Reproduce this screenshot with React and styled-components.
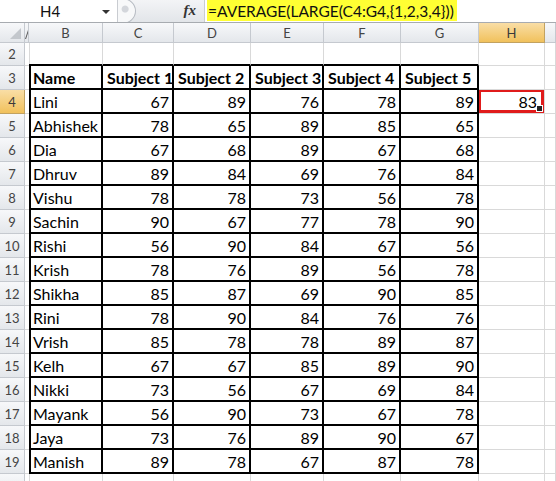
import React from "react";
import styled, { createGlobalStyle } from "styled-components";

const Global = createGlobalStyle`
  html, body { margin: 0; padding: 0; background: #fff; }
  body { font-family: Lato, "Open Sans", sans-serif; overflow: hidden; }
`;

const Page = styled.div`
  width: 556px;
  height: 481px;
  overflow: hidden;
  display: flex;
  flex-direction: column;
  background: #fff;
`;

const FormulaBar = styled.div`
  height: 22px;
  display: flex;
  align-items: stretch;
  border-bottom: 1px solid #a7abb0;
  background: #fff;
`;

const NameBox = styled.div`
  width: 117px;
  display: flex;
  align-items: center;
  position: relative;
  font-size: 15px;
  color: #111;
  padding-left: 40px;
  box-sizing: border-box;
`;

const DropArrow = styled.span`
  position: absolute;
  left: 102px;
  top: 10px;
  width: 0;
  height: 0;
  border-left: 4px solid transparent;
  border-right: 4px solid transparent;
  border-top: 4px solid #333;
`;

const Splitter = styled.div`
  width: 86px;
  background: linear-gradient(#f3f4f6, #e2e5e9);
  border-left: 1px solid #c9ccd1;
  display: flex;
  align-items: center;
  position: relative;
  overflow: hidden;
`;

const Grabber = styled.div`
  width: 26px;
  height: 24px;
  margin-left: -10px;
  border-radius: 50%;
  border: 1px solid #b7bcc3;
  background: radial-gradient(circle at 62% 42%, #d3d6db 0 3px, #f7f8f9 4px);
  flex-shrink: 0;
`;

const Fx = styled.span`
  position: absolute;
  right: 8px;
  top: 2px;
  font-family: "Liberation Serif", serif;
  font-style: italic;
  font-weight: bold;
  font-size: 15px;
  color: #333;
`;

const FormulaArea = styled.div`
  flex: 1;
  display: flex;
  align-items: center;
  padding-left: 2px;
  border-left: 1px solid #c9ccd1;
`;

const Highlight = styled.span`
  background: #ffff33;
  height: 21px;
  align-self: flex-start;
  display: flex;
  align-items: center;
  padding: 0 3px 0 1px;
  font-size: 15.5px;
  color: #111;
  white-space: nowrap;
`;

const Spacer = styled.div`
  height: 2px;
  background: #fff;
`;

const Sheet = styled.div`
  display: grid;
  grid-template-columns: 25px 4px 74px 71px 77px 73px 77px 78px 66px 11px;
  grid-template-rows: 20px 23px repeat(17, 24px) 24px;
  font-size: 16px;
  color: #000;
`;

const Cell = styled.div`
  box-sizing: border-box;
  position: relative;
  overflow: hidden;
  white-space: nowrap;
  display: flex;
  align-items: center;
  justify-content: ${(p) => (p.$align === "right" ? "flex-end" : "flex-start")};
  padding: ${(p) =>
    p.$align === "right" ? `0 ${p.$padRight || 3}px 0 0` : "0 0 0 4px"};
  font-weight: ${(p) => (p.$bold ? 700 : 400)};
  border-right: ${(p) => (p.$blackRight ? "2px solid #000" : "1px solid #d9d9d9")};
  border-bottom: ${(p) => (p.$blackBottom ? "2px solid #000" : "1px solid #d9d9d9")};
`;

const HeadCell = styled.div`
  box-sizing: border-box;
  overflow: hidden;
  display: flex;
  align-items: center;
  justify-content: center;
  font-size: 13px;
  color: ${(p) => (p.$sel ? "#3a3a3a" : "#444")};
  background: ${(p) =>
    p.$sel
      ? "linear-gradient(#f9dea6, #f1c15c)"
      : "linear-gradient(#f7f8fa, #e4e7eb)"};
  border-right: 1px solid ${(p) => (p.$sel ? "#c2a260" : "#c5c9cf")};
  border-bottom: 1px solid ${(p) => (p.$sel ? "#c2a260" : "#c5c9cf")};
`;

const Corner = styled(HeadCell)`
  position: relative;
`;

const CornerTri = styled.span`
  position: absolute;
  right: 3px;
  bottom: 3px;
  width: 0;
  height: 0;
  border-left: 11px solid transparent;
  border-bottom: 11px solid #c3c7cc;
`;

const NarrowMark = styled.span`
  width: 1px;
  height: 12px;
  background: #555;
  transform: skewX(-18deg);
  margin-left: 2px;
`;

const Selection = styled.div`
  position: absolute;
  left: -1px;
  top: -1px;
  right: 0;
  bottom: 0;
  border: 3px solid #e01b1b;
  pointer-events: none;
`;

const Handle = styled.div`
  position: absolute;
  right: -2px;
  bottom: -2px;
  width: 5px;
  height: 5px;
  background: #222;
  border: 1px solid #fff;
`;

const data = [
  ["Lini", 67, 89, 76, 78, 89],
  ["Abhishek", 78, 65, 89, 85, 65],
  ["Dia", 67, 68, 89, 67, 68],
  ["Dhruv", 89, 84, 69, 76, 84],
  ["Vishu", 78, 78, 73, 56, 78],
  ["Sachin", 90, 67, 77, 78, 90],
  ["Rishi", 56, 90, 84, 67, 56],
  ["Krish", 78, 76, 89, 56, 78],
  ["Shikha", 85, 87, 69, 90, 85],
  ["Rini", 78, 90, 84, 76, 76],
  ["Vrish", 85, 78, 78, 89, 87],
  ["Kelh", 67, 67, 85, 89, 90],
  ["Nikki", 73, 56, 67, 69, 84],
  ["Mayank", 56, 90, 73, 67, 78],
  ["Jaya", 73, 76, 89, 90, 67],
  ["Manish", 89, 78, 67, 87, 78],
];

const colLetters = ["B", "C", "D", "E", "F", "G", "H"];

function renderRow(rowNum) {
  const cells = [];
  const inTableRow = rowNum >= 3 && rowNum <= 19;
  cells.push(
    <HeadCell key={`h${rowNum}`} $sel={rowNum === 4}>
      {rowNum <= 19 ? rowNum : null}
    </HeadCell>
  );
  cells.push(<Cell key={`a${rowNum}`} $blackRight={inTableRow} />);
  let values = [];
  if (rowNum === 3)
    values = ["Name", "Subject 1", "Subject 2", "Subject 3", "Subject 4", "Subject 5"];
  else if (inTableRow) values = data[rowNum - 4];
  for (let c = 0; c < 6; c++) {
    const v = values[c];
    const isNum = typeof v === "number";
    cells.push(
      <Cell
        key={`c${rowNum}-${c}`}
        $blackRight={inTableRow}
        $blackBottom={inTableRow || rowNum === 2}
        $bold={rowNum === 3}
        $align={isNum ? "right" : "left"}
      >
        {v}
      </Cell>
    );
  }
  cells.push(
    <Cell
      key={`hcol${rowNum}`}
      $align={rowNum === 4 ? "right" : "left"}
      $padRight={7}
    >
      {rowNum === 4 ? 83 : null}
      {rowNum === 4 && (
        <Selection>
          <Handle />
        </Selection>
      )}
    </Cell>
  );
  cells.push(<Cell key={`i${rowNum}`} />);
  return cells;
}

export default function App() {
  const rows = [];
  for (let r = 2; r <= 20; r++) rows.push(...renderRow(r));
  return (
    <Page>
      <Global />
      <FormulaBar>
        <NameBox>
          H4
          <DropArrow />
        </NameBox>
        <Splitter>
          <Grabber />
          <Fx>fx</Fx>
        </Splitter>
        <FormulaArea>
          <Highlight>=AVERAGE(LARGE(C4:G4,{"{"}1,2,3,4{"}"}))</Highlight>
        </FormulaArea>
      </FormulaBar>
      <Spacer />
      <Sheet>
        <Corner>
          <CornerTri />
        </Corner>
        <HeadCell>
          <NarrowMark />
        </HeadCell>
        {colLetters.map((l) => (
          <HeadCell key={l} $sel={l === "H"}>
            {l}
          </HeadCell>
        ))}
        <HeadCell />
        {rows}
      </Sheet>
    </Page>
  );
}
